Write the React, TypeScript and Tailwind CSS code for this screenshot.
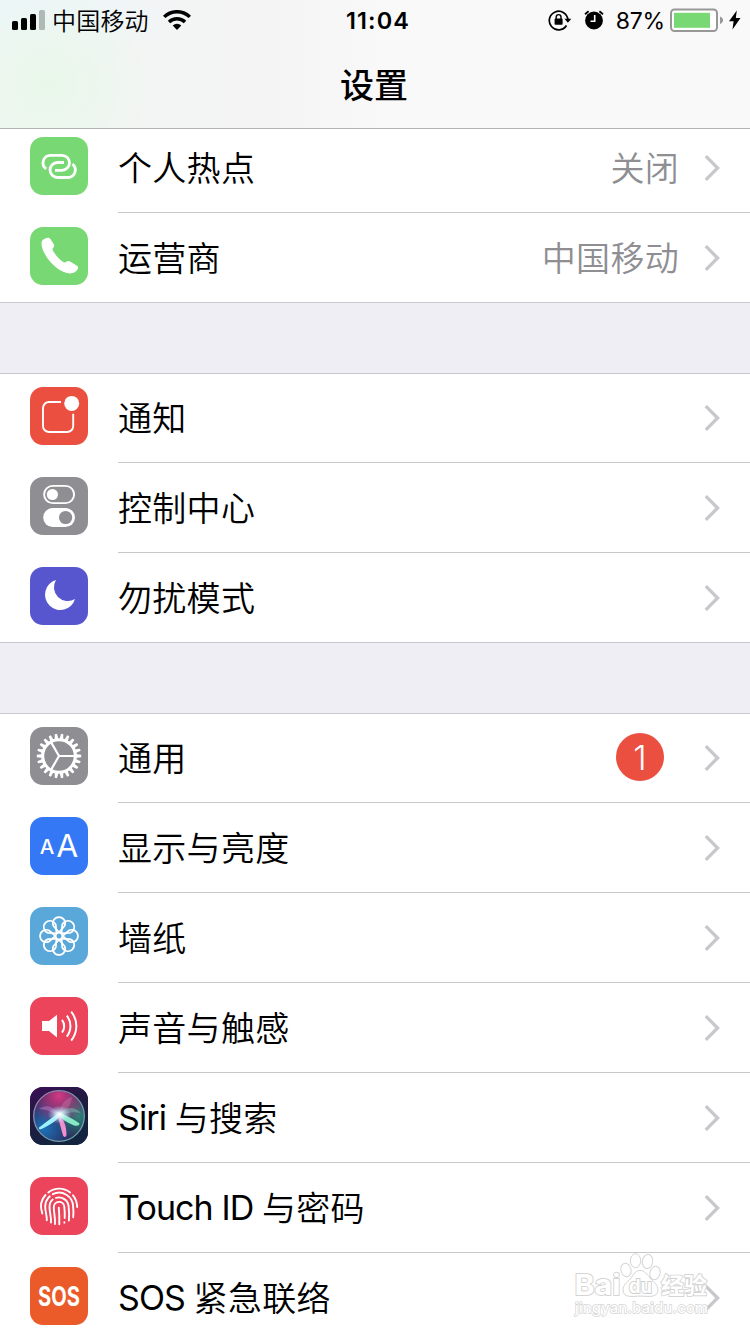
import type { ReactNode } from 'react';

const TEETH = Array.from({ length: 22 }, (_, i) => (i * 360) / 22);
const PETALS = [0, 45, 90, 135, 180, 225, 270, 315];

function HotspotIcon() {
  return (
    <g fill="none" stroke="#fff" strokeWidth="2.8">
      <path d="M16.2 31.9A7.5 7.5 0 0 1 20.8 18.3H32a7.5 7.5 0 0 1 0 15H25" />
      <path d="M42.4 27.1A7.5 7.5 0 0 1 38.4 40.5H27.5a7.5 7.5 0 0 1 0-15H34" />
    </g>
  );
}

function PhoneIcon() {
  return (
    <path
      fill="#fff"
      d="M17.500 10.800c1.300-.3 2.100 0 2.900 1.100l3.400 5.300c.7 1.200.4 2.100-.3 3.200-1 1.400-1.300 2.200-.4 3.600 2.600 4.300 5.700 7.900 10.100 10.900 1.300.9 2.100.5 3.500-.4 1.200-.7 2.100-.9 3.300-.1l7 4.300c1.300.8 1.400 1.900.8 3.100-1 2.500-3.600 4.700-7.600 4.700C28 46.500 11.500 28 11.500 16.500c0-3.200 2.900-5.200 6-5.700z"
    />
  );
}

function NotificationIcon() {
  return (
    <g>
      <path
        fill="none"
        stroke="#fff"
        strokeWidth="1.9"
        d="M31 15H19a6 6 0 0 0-6 6v18a6 6 0 0 0 6 6h18.200a6 6 0 0 0 6-6V26.700"
      />
      <circle cx="41.700" cy="16.400" r="7.500" fill="#fff" />
    </g>
  );
}

function ControlIcon() {
  return (
    <g>
      <rect x="14.100" y="8.900" width="30" height="17.200" rx="8.600" fill="none" stroke="#fff" strokeWidth="1.900" />
      <circle cx="22.400" cy="17.500" r="5.600" fill="#fff" />
      <rect x="13.200" y="31" width="31.800" height="19" rx="9.500" fill="#fff" />
      <circle cx="35.600" cy="40.500" r="6.600" fill="#8e8e93" />
    </g>
  );
}

function MoonIcon() {
  return <path fill="#fff" d="M26 13A15.300 15.300 0 1 0 45 32 13.800 13.800 0 0 1 26 13z" />;
}

function GearIcon() {
  return (
    <g transform="translate(29 29)">
      <circle r="16.300" fill="none" stroke="#fff" strokeWidth="3" />
      {TEETH.map((a) => (
        <path key={a} d="M16.500-1.900 22.200-1.150V1.150L16.500 1.900z" fill="#fff" transform={`rotate(${a})`} />
      ))}
      <path d="M0 0H16M0 0-8-13.900M0 0-8 13.900" stroke="#fff" strokeWidth="2.200" />
    </g>
  );
}

function DisplayIcon() {
  return (
    <g fill="#fff" className="font-['Inter']">
      <text x="9.700" y="36.700" fontSize="20" fontWeight="500" textLength="14.600" lengthAdjust="spacingAndGlyphs">
        A
      </text>
      <text x="26.200" y="39.700" fontSize="31" fontWeight="400" textLength="22" lengthAdjust="spacingAndGlyphs">
        A
      </text>
    </g>
  );
}

function WallpaperIcon() {
  return (
    <g transform="translate(29 29)" fill="none" stroke="#fff" strokeWidth="1.700">
      <circle r="3.400" />
      {PETALS.map((a) => (
        <path key={a} d="M0-3.600-5.500-9.900A6.200 6.200 0 1 1 5.500-9.900z" transform={`rotate(${a})`} />
      ))}
    </g>
  );
}

function SoundIcon() {
  return (
    <g>
      <path fill="#fff" d="M12 24h7l8-6.200v22.600L19 34h-7z" />
      <g fill="none" stroke="#fff" strokeWidth="2">
        <path d="M32 22.800a10.500 10.500 0 0 1 0 12.800" />
        <path d="M36.800 18.600a17 17 0 0 1 0 21" />
        <path d="M41.200 14.600a23 23 0 0 1 0 29" />
      </g>
    </g>
  );
}

function SiriIcon() {
  return (
    <g>
      <defs>
        <linearGradient id="siri-bg" x1="0" y1="0" x2="0.4" y2="1">
          <stop offset="0" stopColor="#3c0f57" />
          <stop offset="0.45" stopColor="#211a40" />
          <stop offset="1" stopColor="#132440" />
        </linearGradient>
        <radialGradient id="siri-pink" cx="0.5" cy="0.1" r="0.6">
          <stop offset="0" stopColor="#d23a85" />
          <stop offset="1" stopColor="#d23a85" stopOpacity="0" />
        </radialGradient>
        <radialGradient id="siri-blue" cx="0.2" cy="0.75" r="0.6">
          <stop offset="0" stopColor="#1c72b8" />
          <stop offset="1" stopColor="#1c72b8" stopOpacity="0" />
        </radialGradient>
        <radialGradient id="siri-green" cx="0.9" cy="0.5" r="0.5">
          <stop offset="0" stopColor="#2a8579" />
          <stop offset="1" stopColor="#2a8579" stopOpacity="0" />
        </radialGradient>
        <radialGradient id="siri-core">
          <stop offset="0" stopColor="#fff" />
          <stop offset="0.3" stopColor="#e4fbff" stopOpacity="0.8" />
          <stop offset="1" stopColor="#a6dcff" stopOpacity="0" />
        </radialGradient>
        <linearGradient id="siri-ring" x1="0" y1="0" x2="1" y2="1">
          <stop offset="0" stopColor="#a479b4" />
          <stop offset="0.5" stopColor="#7b9ab0" />
          <stop offset="1" stopColor="#69a6a8" />
        </linearGradient>
      </defs>
      <rect width="58" height="58" fill="url(#siri-bg)" />
      <circle cx="29" cy="29" r="25" fill="#2b2455" />
      <circle cx="29" cy="29" r="25" fill="url(#siri-blue)" />
      <circle cx="29" cy="29" r="25" fill="url(#siri-green)" />
      <circle cx="29" cy="29" r="25" fill="url(#siri-pink)" />
      <path d="M30 28C22 17 14 18 9 22c8 0 13 4 21 6z" fill="#c98fdc" opacity="0.4" />
      <path d="M29 28c1-9 5-16 13-18-1 8-5 14-13 18z" fill="#e58cb8" opacity="0.3" />
      <path d="M29 28c6-9 15-9 22-2-8-2-14 0-22 2z" fill="#7fd6c4" opacity="0.4" />
      <path d="M31 25C25 28 14 37 9 40.500c-.5 2 1 2.500 3.500 1C19 38 29 34 31 25z" fill="#9cf2fb" />
      <path d="M27 25c7 2 18 8 22.500 11.500 0 3-4.500 2.500-7 1.200C37 35 31 33 27 25z" fill="#86e8c4" />
      <path d="M27 26c2 8 4.500 17 6 22.500 1.500 2.500 3.500 1.500 3.500-1C36.500 40 34.500 32 27 26z" fill="#ef8fcb" />
      <ellipse cx="29.500" cy="27.500" rx="12" ry="9" fill="url(#siri-core)" />
      <circle cx="29" cy="29" r="25.300" fill="none" stroke="url(#siri-ring)" strokeWidth="1.300" />
    </g>
  );
}

function TouchIcon() {
  return (
    <g fill="none" stroke="#fff" strokeWidth="1.900" strokeLinecap="round">
      <path d="M18.300 15.400a17.700 17.700 0 0 1 21.800 0" />
      <path d="M43 18.300c2.600 3 4 7 4.200 11.700" />
      <path d="M12.300 36.500C9.700 29 11.200 22.500 15.500 18" />
      <path d="M16.800 43.300c.3-5-1.600-8.500-1.600-13.300 0-4.500 1.700-8 4.600-10.700" />
      <path d="M22.800 17.200a14 14 0 0 1 20.300 12.300c.4 3.600.5 7 .1 10.700" />
      <path d="M21 45.500c.4-6-1.500-10-1.500-15.500 0-3.200 1.300-5.800 3.200-7.400" />
      <path d="M26 20.900a9.700 9.700 0 0 1 12.600 8.600c.6 5 .8 9.500.3 14" />
      <path d="M25 47c.4-6-1.200-11.500-1.200-16.500 0-7 9.700-7.600 10.500-.8.500 4 .5 7.500.4 11.300" />
      <path d="M29.300 47.300c.2-6 0-11-.5-16.500" />
      <path d="M34.400 45.300v.4" />
    </g>
  );
}

function SosIcon() {
  return (
    <text
      transform="translate(8 38.700) scale(0.76 1)"
      fill="#fff"
      fontSize="26.500"
      fontWeight="700"
      className="font-['Inter']"
    >
      SOS
    </text>
  );
}

type Item = {
  latin?: string;
  label: string;
  color: string;
  icon: ReactNode;
  value?: string;
  badge?: number;
};

const groups: Item[][] = [
  [
    { label: '个人热点', color: 'bg-[#78d873]', icon: <HotspotIcon />, value: '关闭' },
    { label: '运营商', color: 'bg-[#78d873]', icon: <PhoneIcon />, value: '中国移动' },
  ],
  [
    { label: '通知', color: 'bg-[#eb4f3f]', icon: <NotificationIcon /> },
    { label: '控制中心', color: 'bg-[#8e8e93]', icon: <ControlIcon /> },
    { label: '勿扰模式', color: 'bg-[#5856ce]', icon: <MoonIcon /> },
  ],
  [
    { label: '通用', color: 'bg-[#8e8e93]', icon: <GearIcon />, badge: 1 },
    { label: '显示与亮度', color: 'bg-[#3478f6]', icon: <DisplayIcon /> },
    { label: '墙纸', color: 'bg-[#5aa8d9]', icon: <WallpaperIcon /> },
    { label: '声音与触感', color: 'bg-[#eb445b]', icon: <SoundIcon /> },
    { latin: 'Siri ', label: '与搜索', color: 'bg-[#211a40]', icon: <SiriIcon /> },
    { latin: 'Touch ID ', label: '与密码', color: 'bg-[#eb445b]', icon: <TouchIcon /> },
    { latin: 'SOS ', label: '紧急联络', color: 'bg-[#eb5a29]', icon: <SosIcon /> },
  ],
];

function Row({ item, last }: { item: Item; last: boolean }) {
  return (
    <li className="flex h-[90px] pl-[30px]">
      <div className={`mt-[14px] size-[58px] shrink-0 overflow-hidden rounded-[13px] ${item.color}`}>
        <svg viewBox="0 0 58 58" className="size-full">
          {item.icon}
        </svg>
      </div>
      <div
        className={`ml-[30px] flex flex-1 items-center border-b pr-[30px] ${last ? 'border-transparent' : 'border-[#c8c7cc]'}`}
      >
        <span className="flex-1 pt-[3px] text-[34px] leading-none font-[350] tracking-[0.3px]">
          {item.latin && <span className="relative -top-px font-normal tracking-[-0.9px]">{item.latin}</span>}
          {item.label}
        </span>
        {item.value && (
          <span className="mr-[25px] pt-[3px] text-[34px] leading-none font-[350] tracking-[0.3px] text-[#8e8e93]">
            {item.value}
          </span>
        )}
        {item.badge && (
          <span className="mr-10 -mt-px flex size-12 items-center justify-center rounded-full bg-[#eb4f3f] text-[34px] font-[350] text-white">
            {item.badge}
          </span>
        )}
        <svg viewBox="0 0 16 28" className="mt-px h-7 w-4" fill="none" stroke="#c7c7cc" strokeWidth="3.300">
          <path d="M1.800 2.200 13.600 14 1.800 25.800" />
        </svg>
      </div>
    </li>
  );
}

function StatusBar() {
  return (
    <div className="flex h-10 items-center">
      <div className="flex w-[346px] items-center pl-3">
        <svg viewBox="0 0 33 20" className="h-5 w-[33px]">
          <rect y="11" width="6" height="9" rx="1.500" />
          <rect x="9" y="8" width="6" height="12" rx="1.500" />
          <rect x="18" y="4" width="6" height="16" rx="1.500" />
          <rect x="27" width="6" height="20" rx="1.500" fill="#b1b9b6" />
        </svg>
        <span className="ml-[7px] pt-[3px] text-[24px] leading-none font-[350] tracking-[0.2px]">中国移动</span>
        <svg viewBox="0 0 28 20" className="ml-[14px] h-5 w-7">
          <g fill="none" stroke="#000" strokeWidth="3.400">
            <path d="M1.200 6.900a18.300 18.300 0 0 1 25.600 0" />
            <path d="M6 12a11.400 11.400 0 0 1 16 0" />
          </g>
          <path d="M14 20 9.700 15.600a6.200 6.200 0 0 1 8.600 0z" />
        </svg>
      </div>
      <span className="pt-0.5 text-[23.500px] leading-none font-semibold tracking-[1.1px]">11:04</span>
      <div className="ml-auto flex items-center pr-[9px]">
        <svg viewBox="0 0 24 22" className="h-[22px] w-6">
          <path d="M18.500 16.500a9.300 9.300 0 1 1 1.400-5.500" fill="none" stroke="#000" strokeWidth="1.700" />
          <path d="M16.500 9.800h6.800l-3.400 4z" />
          <rect x="6.600" y="9.600" width="8" height="6.200" rx="0.800" />
          <path d="M8.200 10V8a2.400 2.400 0 0 1 4.800 0v2" fill="none" stroke="#000" strokeWidth="1.400" />
        </svg>
        <svg viewBox="0 0 20 20" className="ml-3 h-5 w-5">
          <circle cx="10" cy="10.500" r="8.900" />
          <path d="M1 4.200 4.600 1.300M19 4.200l-3.600-2.900" stroke="#000" strokeWidth="1.800" />
          <path d="M10.700 5v6.300H6.500" fill="none" stroke="#fff" strokeWidth="1.600" />
        </svg>
        <span className="ml-3 pt-0.5 text-[23px] leading-none tracking-[-0.2px]">87%</span>
        <svg viewBox="0 0 54 24" className="ml-[5px] h-6 w-[54px]">
          <rect x="1" y="1.500" width="46" height="21.500" rx="3.500" fill="#fff" stroke="#979797" strokeWidth="2" />
          <rect x="4" y="4.800" width="36" height="15" fill="#78d873" />
          <path d="M50 8.500c2 1 3 2 3 3.700s-1 2.700-3 3.700z" fill="#979797" />
        </svg>
        <svg viewBox="0 0 12 20" className="ml-[5px] h-5 w-3">
          <path d="M7.800.5 0 11.300h4.600L3.500 19.500 11.500 8H6.800z" />
        </svg>
      </div>
    </div>
  );
}

function Watermark() {
  return (
    <svg viewBox="0 0 150 70" className="absolute top-[1250px] left-[570px] h-[70px] w-[150px]">
      <g fill="#fff" stroke="#d4d4d4" strokeWidth="1">
        <ellipse cx="56" cy="20" rx="5" ry="6.800" transform="rotate(-15 56 20)" />
        <ellipse cx="65.500" cy="10.700" rx="5.200" ry="7" />
        <ellipse cx="77.500" cy="11.500" rx="5.200" ry="7" transform="rotate(8 77.500 11.500)" />
        <ellipse cx="85" cy="23" rx="5" ry="6.800" transform="rotate(15 85 23)" />
        <path d="M70 20.500c5 0 7 4 10 7.500 4 4.500 8 7 8 12 0 8-10 6.500-18 6-8 .5-17 2-17-6 0-5 4-7.500 8-12 3-3.500 4-7.500 9-7.500z" />
        <g
          className="font-['Inter','Noto_Sans_CJK_SC',sans-serif]"
          fontWeight="700"
          strokeWidth="1.800"
          paintOrder="stroke"
        >
          <text x="4.500" y="45" fontSize="29" textLength="46" lengthAdjust="spacingAndGlyphs">
            Bai
          </text>
          <text x="59" y="43" fontSize="19" textLength="23" lengthAdjust="spacingAndGlyphs" stroke="#cfcfcf">
            du
          </text>
          <text x="91" y="43.500" fontSize="23" textLength="46">
            经验
          </text>
          <text x="5" y="62.500" fontSize="14.500" fontWeight="500" textLength="133" strokeWidth="1.400">
            jingyan.baidu.com
          </text>
        </g>
      </g>
    </svg>
  );
}

export default function App() {
  return (
    <div className="relative h-[1334px] w-[750px] overflow-hidden bg-[#efeef4] font-['Inter','Noto_Sans_CJK_SC',sans-serif] text-black">
      <header className="relative z-10 h-[129px] border-b border-[#b2b2b2] bg-[#f9f9f9] bg-[radial-gradient(ellipse_110px_110px_at_50px_85px,#e9f7ea_0%,#e9f7ea00_100%),radial-gradient(ellipse_200px_80px_at_0px_0px,#ecf5fa_0%,#ecf5fa00_100%),linear-gradient(90deg,#f0f6f3_0px,#f3f5f4_120px,#f4f4f4_270px,#f9f9f9_390px)]">
        <StatusBar />
        <h1 className="pt-[29px] pr-0.5 text-center text-[34px] leading-none font-medium">设置</h1>
      </header>
      <main className="-mt-[6px] flex flex-col gap-[70px]">
        {groups.map((items, i) => (
          <ul key={i} className="relative bg-white">
            {items.map((item, j) => (
              <Row key={item.label} item={item} last={j === items.length - 1} />
            ))}
            <li className="pointer-events-none absolute inset-0 border-y border-[#c8c7cc]" />
          </ul>
        ))}
      </main>
      <Watermark />
    </div>
  );
}
